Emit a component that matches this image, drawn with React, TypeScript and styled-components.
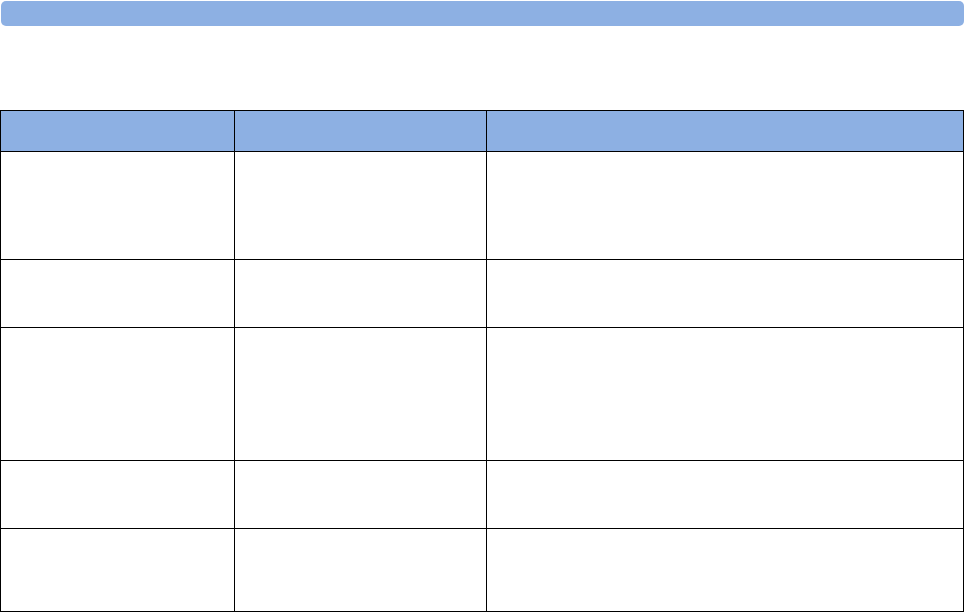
import React from "react";
import styled, { createGlobalStyle } from "styled-components";

const GlobalStyle = createGlobalStyle`
  html, body { margin: 0; padding: 0; background: #ffffff; }
  body { font-family: "Liberation Sans", Arial, sans-serif; }
`;

const Page = styled.div`
  width: 965px;
  height: 612px;
  display: flex;
  flex-direction: column;
  overflow: hidden;
`;

const TitleBar = styled.div`
  margin: 1px 1px 0 1px;
  height: 25px;
  background: #8db0e3;
  border-radius: 5px;
`;

const Table = styled.div`
  margin-top: 84px;
  width: 962px;
  display: grid;
  grid-template-columns: 233px 251px 476px;
  grid-template-rows: 40px 107px 67px 132px 67px 82px;
  gap: 1px;
  padding: 1px;
  background: #000000;
`;

const Cell = styled.div<{ $head?: boolean }>`
  background: ${(p) => (p.$head ? "#8db0e3" : "#ffffff")};
`;

const rows = [true, false, false, false, false, false];

export default function App() {
  return (
    <>
      <GlobalStyle />
      <Page>
        <TitleBar />
        <Table role="table">
          {rows.map((head, r) =>
            [0, 1, 2].map((c) => <Cell key={`${r}-${c}`} $head={head} role="cell" />)
          )}
        </Table>
      </Page>
    </>
  );
}
